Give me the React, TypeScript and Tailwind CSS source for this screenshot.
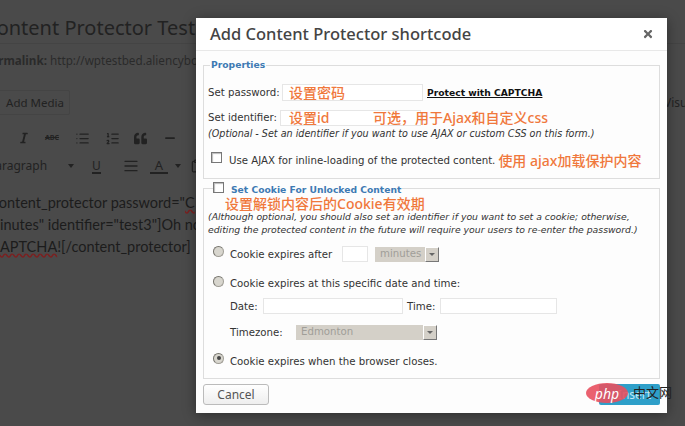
import type { ReactNode } from "react";
import { AlignJustify, Clipboard, List, ListOrdered, Minus } from "lucide-react";
import { FaItalic, FaQuoteLeft, FaTimes } from "react-icons/fa";

const sans = "font-['Noto_Sans','Noto_Sans_CJK_SC',sans-serif]";
const verdana = "font-['DejaVu_Sans','Noto_Sans_CJK_SC',sans-serif]";

const Note = ({ children, className = "" }: { children: ReactNode; className?: string }) => (
  <span className={`${sans} text-[14px] leading-[16px] font-medium text-[#f0783c] whitespace-nowrap ${className}`}>{children}</span>
);

const Radio = ({ checked = false }: { checked?: boolean }) => (
  <span className="mt-[-6px] flex h-[11px] w-[11px] shrink-0 items-center justify-center rounded-full border border-[#a09e96] border-l-[#77756e] border-t-[#77756e] bg-[#d8d6ce]">
    {checked && <span className="h-[4px] w-[4px] rounded-full bg-[#444]" />}
  </span>
);

const Checkbox = ({ className }: { className: string }) => (
  <span className={`block h-[11px] w-[11px] shrink-0 border border-[#777] bg-white shadow-[inset_1px_1px_1px_#bbb] ${className}`} />
);

const FakeSelect = ({ label, className }: { label: string; className: string }) => (
  <span className={`flex h-[15px] items-center justify-between bg-[#d4d0c8] pl-[5px] text-[#a09e98] ${className}`}>
    {label}
    <span className="flex h-[15px] w-[14px] items-center justify-center border border-b-[#777] border-l-white border-r-[#777] border-t-white bg-[#d4d0c8]">
      <span className="h-0 w-0 border-x-[3px] border-t-[3px] border-x-transparent border-t-[#666]" />
    </span>
  </span>
);

const Cell = ({ children, className }: { children: ReactNode; className: string }) => (
  <span className={`flex shrink-0 items-center justify-center ${className}`}>{children}</span>
);

const Backdrop = () => (
  <div className={`relative h-[426px] w-[685px] overflow-hidden bg-[#4a4a4a] text-[#222] ${sans}`}>
    <div className="mt-[13px] flex h-[31px] items-center border-b border-[#444] whitespace-nowrap">
      <span className="ml-[-16px] text-[20px] leading-[26px]">Content Protector Test</span>
    </div>
    <p className="ml-[-16px] mt-[8px] text-[11.7px] leading-[16px] text-[#2a2a2a] whitespace-nowrap">
      <b>Permalink:</b> http://wptestbed.aliencybo
    </p>
    <div className="ml-[-10px] mt-[22px] flex h-[25px] w-[80px] items-center justify-end rounded-[2px] border border-[#444] pr-[5px] text-[11.5px]">
      Add Media
    </div>
    <div className="mt-[13px] flex h-[20px] items-center">
      <Cell className="ml-[14px] w-[20px]"><FaItalic size={12} /></Cell>
      <Cell className="ml-[8px] w-[20px] text-[7px] line-through font-bold">ABC</Cell>
      <Cell className="ml-[10px] w-[20px]"><List size={15} /></Cell>
      <Cell className="ml-[10px] w-[20px]"><ListOrdered size={15} /></Cell>
      <Cell className="ml-[8px] w-[20px]"><FaQuoteLeft size={13} /></Cell>
      <Cell className="ml-[10px] w-[20px]"><Minus size={14} strokeWidth={3} /></Cell>
    </div>
    <div className="mt-[6px] flex h-[24px] items-center">
      <span className="ml-[-12px] w-[80px] text-[12px] whitespace-nowrap">Paragraph</span>
      <span className="h-0 w-0 border-x-[3px] border-t-[4px] border-x-transparent border-t-[#222]" />
      <Cell className="mx-[18px] h-[16px] w-[9px] border-b-2 border-[#222] text-[12px] leading-[13px]">U</Cell>
      <Cell className="ml-[2px] w-[20px]"><AlignJustify size={16} /></Cell>
      <Cell className="ml-[9px] h-[16px] w-[18px] border-b-2 border-[#222] text-[13px] leading-[14px]">A</Cell>
      <span className="ml-[7px] h-0 w-0 border-x-[3px] border-t-[4px] border-x-transparent border-t-[#222]" />
      <Cell className="ml-[8px] w-[16px]"><Clipboard size={14} /></Cell>
    </div>
    <div className="ml-[-8px] mt-[14px] font-['Lato',sans-serif] text-[14.5px] leading-[22px] text-[#1c1c1c] whitespace-nowrap">
      <p>
        content_protector password="<span className="underline decoration-wavy decoration-[#7a2020]">C</span>
      </p>
      <p className="ml-[-4px]">minutes" identifier="test3"]Oh no</p>
      <p className="ml-[8px]">
        <span className="underline decoration-wavy decoration-[#7a2020]">APTCHA</span>![/content_protector]
      </p>
    </div>
    <span className="absolute left-[664px] top-[94px] text-[12px] whitespace-nowrap">Visual</span>
  </div>
);

export default function App() {
  return (
    <div className="relative h-[426px] w-[685px] overflow-hidden">
      <Backdrop />
      <div className={`absolute left-[196px] top-[18px] flex h-[395px] w-[471px] flex-col bg-white shadow-[0_2px_12px_rgba(0,0,0,0.4)] ${verdana} text-[10.2px] text-[#333]`}>
        <div className={`flex h-[33px] shrink-0 items-center justify-between border-b border-[#e8e8e8] pl-[14px] pr-[13px] ${sans}`}>
          <span className="text-[16.5px] font-medium text-[#444]">Add Content Protector shortcode</span>
          <FaTimes size={12} className="text-[#666]" />
        </div>

        <div className="flex-1 bg-[#fdfdfd] px-[7px]">
          <fieldset className="mt-[8px] h-[120px] min-w-0 border border-[#ddd] px-[4px]">
            <legend className="ml-[2px] h-[12px] px-[1px] text-[9.2px] leading-[12px] font-bold text-[#3d7ab3]">Properties</legend>
            <div className="mt-[13px] flex h-[17px] items-center whitespace-nowrap">
              <span className="w-[74px]">Set password:</span>
              <span className="flex h-[17px] w-[141px] items-center border border-[#e6e6e6] bg-white pl-[6px]">
                <Note>设置密码</Note>
              </span>
              <span className="ml-[4px] text-[9.2px] font-bold text-[#111] underline">Protect with CAPTCHA</span>
            </div>
            <div className="mt-[9px] flex h-[16px] items-center whitespace-nowrap">
              <span className="w-[72px]">Set identifier:</span>
              <span className="flex h-[16px] w-[141px] shrink-0 items-center border border-[#e6e6e6] bg-white pl-[8px]">
                <Note>设置id</Note>
              </span>
              <Note className="relative ml-[-48px]">可选，用于Ajax和自定义css</Note>
            </div>
            <p className="mt-[2px] text-[9.6px] leading-[12px] italic whitespace-nowrap">
              (Optional - Set an identifier if you want to use AJAX or custom CSS on this form.)
            </p>
            <div className="mt-[13px] flex h-[16px] items-center whitespace-nowrap">
              <Checkbox className="ml-[3px] mt-[-8px]" />
              <span className="ml-[7px]">Use AJAX for inline-loading of the protected content.</span>
              <Note className="ml-[3px]">使用 ajax加载保护内容</Note>
            </div>
          </fieldset>

          <fieldset className="mt-[2px] h-[198px] min-w-0 border border-[#ddd] px-[4px]">
            <legend className="ml-[5px] flex h-[14px] items-start text-[9.2px] leading-[12px] font-bold whitespace-nowrap text-[#3d7ab3]">
              <Checkbox className="mt-[1px] mr-[7px]" />
              <span className="mt-[3px] pr-[1px]">Set Cookie For Unlocked Content</span>
            </legend>
            <Note className="ml-[17px] mt-[1px] block">设置解锁内容后的Cookie有效期</Note>
            <p className="mt-[-2px] text-[9.3px] leading-[13px] italic whitespace-nowrap">
              (Although optional, you should also set an identifier if you want to set a cookie; otherwise,
              <br />
              editing the protected content in the future will require your users to re-enter the password.)
            </p>
            <div className="mt-[10px] flex h-[16px] items-center pl-[5px] whitespace-nowrap">
              <Radio />
              <span className="ml-[6px] mt-[2px] w-[112px]">Cookie expires after</span>
              <span className="h-[16px] w-[26px] border border-[#e6e6e6] bg-white" />
              <FakeSelect label="minutes" className="ml-[7px] w-[64px]" />
            </div>
            <div className="mt-[16px] flex h-[12px] items-center pl-[5px] whitespace-nowrap">
              <Radio />
              <span className="ml-[6px]">Cookie expires at this specific date and time:</span>
            </div>
            <div className="mt-[8px] flex h-[16px] items-center pl-[22px] whitespace-nowrap">
              <span className="mt-[2px] w-[33px]">Date:</span>
              <span className="h-[16px] w-[140px] border border-[#e6e6e6] bg-white" />
              <span className="ml-[4px] mt-[2px] w-[33px]">Time:</span>
              <span className="h-[16px] w-[117px] border border-[#e6e6e6] bg-white" />
            </div>
            <div className="mt-[10px] flex h-[16px] items-center pl-[22px] whitespace-nowrap">
              <span className="mt-[1px] w-[66px]">Timezone:</span>
              <FakeSelect label="Edmonton" className="w-[141px]" />
            </div>
            <div className="mt-[15px] flex h-[12px] items-center pl-[5px] whitespace-nowrap">
              <Radio checked />
              <span className="ml-[6px] mt-[1px]">Cookie expires when the browser closes.</span>
            </div>
          </fieldset>

          <div className="relative mt-[5px] flex items-center justify-between">
            <button className={`flex h-[21px] w-[66px] items-center justify-center rounded-[3px] border border-[#bbb] bg-gradient-to-b from-white to-[#eee] text-[12px] text-[#555] ${sans}`}>
              Cancel
            </button>
            <button className={`h-[21px] w-[61px] rounded-[2px] bg-[#2e9fc9] pl-[10px] text-[12px] text-[#bfe6f5] ${sans}`}>
              Insert
            </button>
            <div className={`absolute left-[383px] top-[-1px] flex h-[20px] items-center ${sans}`}>
              <span className="flex h-[20px] w-[42px] items-center justify-center rounded-[50%] bg-[#e8505f]/90 text-[14px] italic text-white">
                php
              </span>
              <span className="ml-[5px] text-[13px] whitespace-nowrap text-[#222]">中文网</span>
            </div>
          </div>
        </div>
      </div>
    </div>
  );
}
